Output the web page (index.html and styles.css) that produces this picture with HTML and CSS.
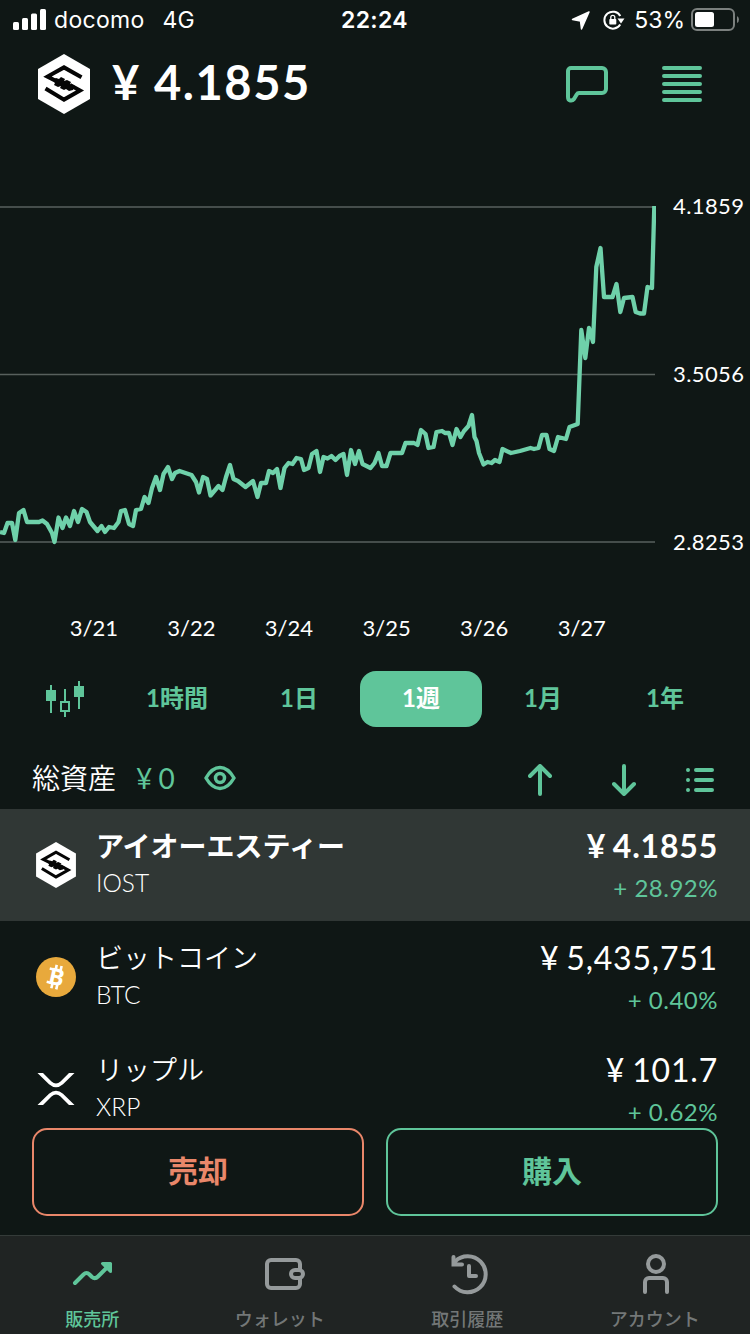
FILE: index.html
```html
<!DOCTYPE html>
<html lang="ja">
<head>
  <meta charset="UTF-8" />
  <meta name="viewport" content="width=device-width, initial-scale=1.0" />
  <title>販売所</title>
  <link rel="stylesheet" href="styles.css">
</head>
<body>
  <svg class="defs" width="0" height="0">
    <symbol id="iost" viewBox="0 0 52 60">
      <path d="M26 0L52 15V45L26 60L0 45V15Z" fill="#fff" />
      <path d="M43.5 23.2L26 13.4L9.5 22.6L20 28M7.5 34.5L26 45.6L42 36.6L32 31" fill="none" stroke="#050505" stroke-width="4" />
      <path d="M15 26l3-2 3 1 2-2 4 2-1 2 3-1 4 2-1 2 5 2-2 4-4 1-3-2-2 1-4-2 1-2-3 1-4-2 1-2z" fill="#050505" />
    </symbol>
  </svg>

  <div class="app">
    <div class="status-bar">
      <div class="status-left">
        <svg width="34" height="22" viewBox="0 0 34 22" fill="#fff">
          <rect x="0" y="13" width="6" height="8" rx="1.5" />
          <rect x="9" y="9" width="6" height="12" rx="1.5" />
          <rect x="18" y="4.5" width="6" height="16.5" rx="1.5" />
          <rect x="27" y="0" width="6" height="21" rx="1.5" />
        </svg>
        <span class="carrier">docomo</span>
        <span class="network">4G</span>
      </div>
      <div class="clock">22:24</div>
      <div class="status-right">
        <svg width="20" height="20" viewBox="0 0 20 20"><path d="M18 2L1.500 9.500L9.500 11L10.500 19Z" fill="#fff" stroke="#fff" stroke-width="1.5" stroke-linejoin="round" /></svg>
        <svg class="lock" width="22" height="20" viewBox="0 0 22 20">
          <path d="M17.300 6A8.500 8.500 0 1 0 17.200 14.500" fill="none" stroke="#fff" stroke-width="2" />
          <path d="M14.500 8.500H21.500L18 13.500Z" fill="#fff" />
          <rect x="6.300" y="9" width="7" height="5.500" rx="0.800" fill="#fff" />
          <path d="M7.800 9V7.300a2 2 0 0 1 4 0V9" fill="none" stroke="#fff" stroke-width="1.300" />
        </svg>
        <span class="percent">53%</span>
        <svg width="50" height="24" viewBox="0 0 50 24">
          <rect x="1" y="1" width="42" height="21" rx="5" fill="none" stroke="#7b807e" stroke-width="2" />
          <rect x="4" y="4" width="19" height="15" rx="2.5" fill="#fff" />
          <path d="M46 8q2 1 2 3.500t-2 3.500z" fill="#7b807e" />
        </svg>
      </div>
    </div>

    <header class="header">
      <svg class="coin-logo" width="52" height="60"><use href="#iost" /></svg>
      <h1 class="price">¥ 4.1855</h1>
      <svg class="chat-icon" width="44" height="40" viewBox="0 0 44 40" fill="none" stroke="#5fc59a" stroke-width="4" stroke-linejoin="round">
        <path d="M6 3H37a4 4 0 0 1 4 4V24a4 4 0 0 1-4 4H14q-1.500 0-2.300 1.400L9 34q-1.500 2-3.800 1.500Q3 35 3 32V6a3 3 0 0 1 3-3Z" />
      </svg>
      <svg class="menu-icon" width="40" height="36" viewBox="0 0 40 36" stroke="#5fc59a" stroke-width="4" stroke-linecap="round">
        <path d="M2 2H38M2 10H38M2 18H38M2 26H38M2 34H38" />
      </svg>
    </header>

    <section class="chart">
      <svg class="plot" width="656" height="366" viewBox="0 192 656 366">
        <path class="grid" d="M0 207H655M0 374.500H655M0 542H655" />
        <polyline class="line" points="0,532 4,533 7.5,523 12,523 15.3,540 19,513 23.5,510 27,522 39,522 42.5,520.5 47,524 52,533 54.5,542 58.5,517.5 62.5,528 66,517.5 70,526 74,511 78,522 82,509 86.5,512 90,522 97.5,531 101.5,526 105,532 109,527 114,528 118.5,522 121,511 125,510 129,524 133,526 136,510 141,509 144.5,497 148.5,503 152,488 156,477 160,490 163.5,474 168,467 172,479 175,473 179.5,471 191.5,475 196,482 199,492.5 203,477 207,479 210.5,495.5 218.5,486 222.5,490 226,477 230,465 233.5,479 238,481 245.5,487 253,481 257.5,497 261,483 266,483 269,471 273,473 277,469 280.5,488 284.5,468 288.5,463 292.5,464 296.5,458 301,459 304,470 308.5,468 312,454 316.5,451 320,472 323.5,457 327.5,458.5 331.5,456 335.5,460 339.5,456 343.5,454 347,475 351,450 355,464 359,451 362.5,464 370.5,468 374.5,463 378.5,453 382,466 386.5,466 390.5,453 402,453 405.5,443 414,443 417.5,445 421,430 425.5,434 428.5,448 433.5,447 436.5,432 442,431 445,433 449,433 452.5,445 456.5,429 460.5,437 464,431 468.5,426 472,415 474.5,437 476.5,441 479,453 483.5,464.5 487.5,462 491.5,463 495,460 499.5,462 502.5,449 511,453 520,451 530.5,448 534,449 538.5,448 542,435 546.5,435 549.5,449 554,451 558,437 566,439 569.5,427 577.7,424 581.3,330 585.3,358 589,328 593,342 596.3,267 600.5,248 604,297 612.5,297 616.5,284 620.3,312 624,298 632.5,297 635.7,312 640,313.5 644,313.5 647.5,287 652,288 654.3,206" />
      </svg>
      <div class="y-axis">
        <span>4.1859</span>
        <span>3.5056</span>
        <span>2.8253</span>
      </div>
    </section>
    <div class="x-axis">
      <span>3/21</span>
      <span>3/22</span>
      <span>3/24</span>
      <span>3/25</span>
      <span>3/26</span>
      <span>3/27</span>
    </div>

    <nav class="ranges">
      <div class="range-icon">
        <svg width="40" height="38" viewBox="0 0 40 38" fill="#5fc59a">
          <path d="M1 10h10v11H7v12H5V21H1zM5 5h2v5H5zM29 6h10v11h-4v12h-2V17h-4zM33 1h2v5h-2z" />
          <path d="M19 9h2v12h4v11h-4v5h-2v-5h-4V21h4zM17 23v7h6v-7z" fill-rule="evenodd" />
        </svg>
      </div>
      <div class="range">1時間</div>
      <div class="range">1日</div>
      <div class="range active">1週</div>
      <div class="range">1月</div>
      <div class="range">1年</div>
    </nav>

    <div class="assets">
      <span class="assets-label">総資産</span>
      <span class="assets-value">¥ 0</span>
      <svg class="eye" width="32" height="26" viewBox="0 0 32 26" fill="none" stroke="#5fc59a">
        <path d="M2 13Q8 2.500 16 2.500T30 13Q24 23.500 16 23.500T2 13Z" stroke-width="3.5" stroke-linejoin="round" />
        <circle cx="16" cy="13" r="4.5" stroke-width="3.5" />
      </svg>
      <div class="sort">
        <svg width="24" height="32" viewBox="0 0 24 32"><path d="M12 30V2M2 12L12 2L22 12" /></svg>
        <svg width="24" height="32" viewBox="0 0 24 32"><path d="M12 2V30M2 20L12 30L22 20" /></svg>
        <svg width="28" height="24" viewBox="0 0 28 24"><path d="M2 2h.01M10 2H26M2 12h.01M10 12H26M2 22h.01M10 22H26" /></svg>
      </div>
    </div>

    <div class="coins">
      <div class="coin selected">
        <svg class="coin-icon" width="40" height="46"><use href="#iost" /></svg>
        <div class="coin-name">
          <div class="name">アイオーエスティー</div>
          <div class="symbol">IOST</div>
        </div>
        <div class="coin-price">
          <div class="value">¥ 4.1855</div>
          <div class="change">+ 28.92%</div>
        </div>
      </div>
      <div class="coin">
        <svg class="coin-icon" width="40" height="40" viewBox="0 0 40 40">
          <circle cx="20" cy="20" r="20" fill="#e8a93c" />
          <g transform="rotate(13 20 20)">
            <path d="M18 8V13M23 8V13M18 27V32M23 27V32M12 13.200H17M12 26.800H17" stroke="#fff" stroke-width="2.600" />
            <text class="btc-letter" x="20.5" y="28" text-anchor="middle">B</text>
          </g>
        </svg>
        <div class="coin-name">
          <div class="name">ビットコイン</div>
          <div class="symbol">BTC</div>
        </div>
        <div class="coin-price">
          <div class="value">¥ 5,435,751</div>
          <div class="change">+ 0.40%</div>
        </div>
      </div>
      <div class="coin">
        <svg class="coin-icon" width="40" height="32" viewBox="0 0 40 32" fill="#fff">
          <path d="M1.500 0H7L15.500 8.500Q20 12.500 24.500 8.500L33 0H38.500L27 11.300Q20 17.300 13 11.300Z" />
          <path d="M1.500 32H7L15.500 23.500Q20 19.500 24.500 23.500L33 32H38.500L27 20.700Q20 14.700 13 20.700Z" />
        </svg>
        <div class="coin-name">
          <div class="name">リップル</div>
          <div class="symbol">XRP</div>
        </div>
        <div class="coin-price">
          <div class="value">¥ 101.7</div>
          <div class="change">+ 0.62%</div>
        </div>
      </div>
    </div>

    <div class="actions">
      <div class="btn sell">売却</div>
      <div class="btn buy">購入</div>
    </div>

    <nav class="tabs">
      <div class="tab active">
        <svg width="44" height="44" viewBox="0 0 44 44" fill="none" stroke="#5fc59a" stroke-width="4" stroke-linecap="round" stroke-linejoin="round">
          <path d="M3 31L11.500 22.500Q14.500 19.500 17.500 22.500L20 25Q23 27.500 26 24.500L38 12.500" />
          <path d="M30.500 11.500H38.500V19.500Z" fill="#5fc59a" stroke-width="3" />
        </svg>
        <span>販売所</span>
      </div>
      <div class="tab">
        <svg width="48" height="44" viewBox="0 0 48 44" fill="none" stroke="#959a9b" stroke-width="4">
          <path d="M43 17V12a4 4 0 0 0-4-4H14a4 4 0 0 0-4 4V32a4 4 0 0 0 4 4H39a4 4 0 0 0 4-4V27" />
          <rect x="34" y="18" width="12" height="8" rx="4" />
        </svg>
        <span>ウォレット</span>
      </div>
      <div class="tab">
        <svg width="44" height="44" viewBox="0 0 44 44" fill="none" stroke="#959a9b" stroke-width="4" stroke-linecap="round">
          <path d="M7.500 34.500A18 18 0 1 0 8 9.500" />
          <path d="M6.500 5V12.500H15" />
          <path d="M6 7L13 13H6Z" fill="#959a9b" stroke="none" />
          <path d="M22 14V24H29" stroke-linejoin="round" />
        </svg>
        <span>取引履歴</span>
      </div>
      <div class="tab">
        <svg width="44" height="44" viewBox="0 0 44 44" fill="none" stroke="#959a9b" stroke-width="4" stroke-linecap="round">
          <circle cx="22" cy="12" r="8" />
          <path d="M11 40V30a4 4 0 0 1 4-4H29a4 4 0 0 1 4 4V40" />
        </svg>
        <span>アカウント</span>
      </div>
    </nav>
  </div>
</body>
</html>
```
FILE: styles.css
```css
:root {
  --bg: #0f1715;
  --green: #5fc59a;
  --orange: #e9876a;
  --selected: #303735;
}

* {
  box-sizing: border-box;
}

body {
  margin: 0;
  background: var(--bg);
  color: #fff;
  font-family: Lato, "Noto Sans CJK JP", sans-serif;
}

svg {
  display: block;
  flex-shrink: 0;
}

.defs {
  position: absolute;
}

.app {
  width: 750px;
  height: 1334px;
  display: flex;
  flex-direction: column;
  overflow: hidden;
}

/* status bar */
.status-bar {
  height: 40px;
  padding: 0 9px 0 13px;
  display: grid;
  grid-template-columns: 1fr auto 1fr;
  align-items: center;
  font-family: Inter, sans-serif;
  font-size: 23px;
  line-height: 40px;
}

.status-left,
.status-right {
  display: flex;
  align-items: center;
}

.carrier {
  margin-left: 7px;
  letter-spacing: 0.3px;
}

.network {
  margin-left: 18px;
}

.clock {
  margin-right: 5px;
  font-weight: 600;
  letter-spacing: 0.3px;
}

.status-right {
  justify-content: flex-end;
}

.lock {
  margin-left: 12px;
}

.percent {
  margin: 0 6px 0 9px;
}

/* header */
.header {
  height: 152px;
  padding: 14px 48px 0 38px;
  display: flex;
  align-items: flex-start;
}

.price {
  margin: -2px auto 0 22px;
  font-size: 47px;
  font-weight: 700;
  line-height: 60px;
  letter-spacing: 1.6px;
}

.chat-icon {
  margin-top: 11px;
}

.menu-icon {
  margin: 12px 0 0 53px;
}

/* chart */
.chart {
  height: 366px;
  display: flex;
}

.grid {
  stroke: #58605d;
  stroke-width: 1.5;
}

.line {
  fill: none;
  stroke: #6fd1aa;
  stroke-width: 4.3;
  stroke-linejoin: round;
}

.y-axis {
  margin-left: 17px;
  padding-bottom: 2px;
  display: flex;
  flex-direction: column;
  justify-content: space-between;
  font-size: 22px;
  line-height: 28px;
  letter-spacing: 0.4px;
}

.x-axis {
  height: 113px;
  padding: 55px 0 0 45px;
  display: flex;
  font-size: 22px;
  line-height: 30px;
}

.x-axis span {
  width: 97.6px;
  text-align: center;
}

/* range selector */
.ranges {
  height: 56px;
  display: flex;
  color: var(--green);
  font-size: 24px;
  font-weight: 700;
}

.range-icon {
  width: 116px;
  padding: 9px 0 0 45px;
}

.range {
  width: 122px;
  line-height: 54px;
  text-align: center;
  border-radius: 16px;
}

.range.active {
  background: var(--green);
  color: #fff;
}

/* total assets */
.assets {
  height: 82px;
  padding: 20px 36px 0 32px;
  display: flex;
  align-items: center;
}

.assets-label {
  font-size: 28px;
  font-weight: 350;
  line-height: 40px;
}

.assets-value {
  margin-left: 20px;
  color: var(--green);
  font-size: 28px;
  word-spacing: -1px;
}

.eye {
  margin-left: 29px;
}

.sort {
  margin-left: auto;
  display: flex;
  align-items: center;
  padding-top: 4px;
}

.sort svg {
  fill: none;
  stroke: var(--green);
  stroke-width: 4;
  stroke-linecap: round;
  stroke-linejoin: round;
}

.sort svg:nth-child(2) {
  margin: 0 50px 0 60px;
}

/* coin list */
.coins {
  height: 319px;
  overflow: hidden;
}

.coin {
  height: 112px;
  padding: 0 32px 0 36px;
  display: flex;
  align-items: center;
}

.coin.selected {
  background: var(--selected);
}

.coin-name {
  height: 112px;
  margin-left: 20px;
  padding-top: 17px;
}

.name {
  font-size: 27px;
  font-weight: 350;
  line-height: 40px;
}

.symbol {
  margin-top: -1px;
  font-size: 24.5px;
  font-weight: 300;
  line-height: 36px;
}

.coin-price {
  height: 112px;
  margin-left: auto;
  padding-top: 17px;
  text-align: right;
}

.value {
  font-size: 32px;
  line-height: 40px;
  letter-spacing: 0.8px;
  word-spacing: -2px;
}

.selected .name,
.selected .value {
  font-weight: 700;
}

.selected .name {
  font-size: 28px;
}

.change {
  margin-top: 4px;
  color: var(--green);
  font-size: 24px;
  line-height: 36px;
  letter-spacing: 0.5px;
}

.btc-letter {
  fill: #fff;
  font-family: "Open Sans", sans-serif;
  font-size: 23px;
  font-weight: 700;
}

/* sell and buy */
.actions {
  height: 107px;
  padding: 0 32px;
  display: flex;
  gap: 22px;
}

.btn {
  flex: 1;
  height: 88px;
  border: 2px solid;
  border-radius: 15px;
  font-size: 30px;
  font-weight: 700;
  line-height: 80px;
  text-align: center;
}

.sell {
  color: var(--orange);
}

.buy {
  color: var(--green);
}

/* tab bar */
.tabs {
  height: 99px;
  border-top: 1px solid #343b39;
  background: #202423;
  display: flex;
}

.tab {
  flex: 1;
  padding-top: 16px;
  display: flex;
  flex-direction: column;
  align-items: center;
  color: #737777;
  font-size: 18px;
  font-weight: 500;
  line-height: 26px;
}

.tab span {
  margin: 10px 3px 0 0;
}

.tab.active {
  color: var(--green);
}
```
